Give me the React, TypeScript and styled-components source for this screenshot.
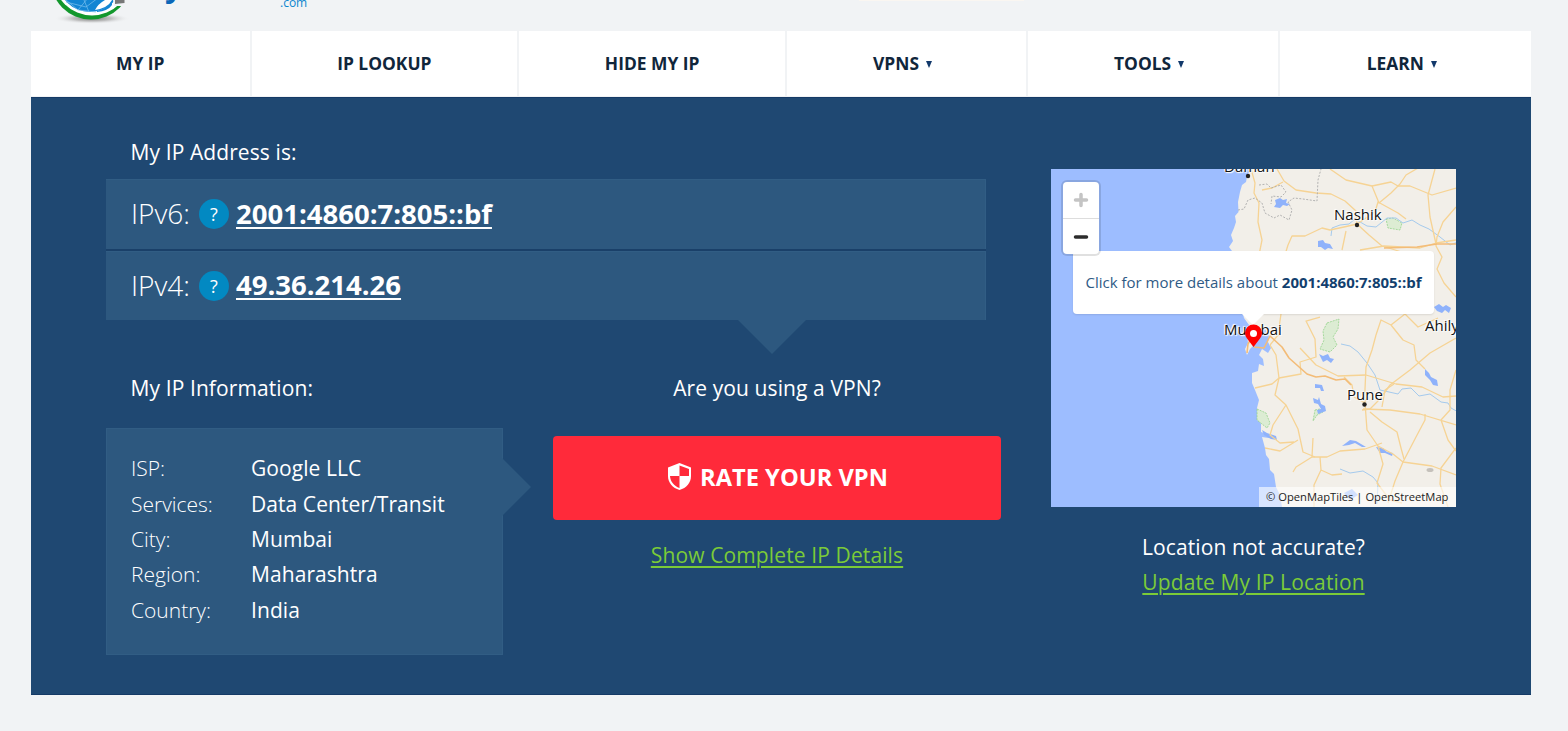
import React from "react";
import styled, { createGlobalStyle } from "styled-components";

const GlobalStyle = createGlobalStyle`
  *, *::before, *::after { box-sizing: border-box; }
  html { overflow: hidden; }
  body {
    margin: 0;
    background: #f1f3f5;
    font-family: "Open Sans", "Noto Sans", sans-serif;
    color: #fff;
  }
  p, h2, dl, dd, dt { margin: 0; font-weight: 400; }
`;

const Page = styled.div`
  width: 1500px;
  height: 731px;
  margin-left: 31px;
  overflow: hidden;
`;

const Header = styled.header`
  height: 31px;
  display: flex;
  align-items: flex-start;
  position: relative;
`;

const LogoMark = styled.svg`
  display: block;
  margin-left: 14px;
  flex: none;
`;

const LogoName = styled.span`
  margin: -34px 0 0 36px;
  width: 115px;
  font-size: 31px;
  line-height: 38px;
  font-weight: 700;
  color: #0b66b8;
  white-space: nowrap;
`;

const LogoSuffix = styled.span`
  margin-top: -5px;
  font-size: 12px;
  line-height: 16px;
  color: #0c86cf;
`;

const HeaderEdge = styled.div`
  margin-left: 552px;
  width: 165px;
  height: 1px;
  background: #faf6f1;
`;

const Nav = styled.nav`
  display: grid;
  grid-template-columns: 218.5px 265.5px 266px 238.5px 250.5px 250.5px;
  justify-content: space-between;
  height: 65px;
  margin-bottom: 1px;
`;

const NavItem = styled.a<{ $menu?: boolean }>`
  display: flex;
  align-items: center;
  justify-content: center;
  gap: 7px;
  background: #fff;
  color: #10263b;
  font-size: 17.4px;
  font-weight: 700;
  padding: 0 ${(p) => (p.$menu ? 8 : 0)}px 1px 0;
`;

const Caret = styled.span`
  width: 0;
  height: 0;
  margin-top: 2px;
  border: 3.5px solid transparent;
  border-top: 7px solid #12396b;
  border-bottom: 0;
`;

const Panel = styled.main`
  display: flex;
  gap: 50px;
  height: 598px;
  padding: 0 75px;
  background: #1f4872;
  border: 1px solid #153a66;
  border-width: 1px 0 1px 0;
`;

const Primary = styled.section`
  width: 895px;
  flex: none;
`;

const Heading = styled.h2<{ $top: number }>`
  margin-top: ${(p) => p.$top}px;
  padding-left: 24.5px;
  font-size: 21px;
  line-height: 28px;
  letter-spacing: 0.1px;
`;

const AddressList = styled.div`
  position: relative;
  width: 880px;
  margin-top: 13px;
  display: grid;
  gap: 2px;
  background: #1a4069;

  &::after {
    content: "";
    position: absolute;
    top: 141px;
    left: 632px;
    border: 34px solid transparent;
    border-top-color: #2d587f;
    border-bottom: 0;
  }
`;

const AddressRow = styled.div`
  display: flex;
  align-items: center;
  height: 69.5px;
  padding: 0 25px;
  background: #2d587f;
  border: 1px solid #315d84;
  border-width: 1px 1px 0 0;
`;

const Protocol = styled.span`
  width: 68px;
  margin-top: -2px;
  font-size: 28px;
  font-weight: 300;
`;

const Help = styled.span`
  width: 30px;
  height: 30px;
  border-radius: 50%;
  background: #0289c2;
  text-align: center;
  font-size: 18px;
  line-height: 31px;
`;

const Address = styled.a`
  margin: -2px 0 0 7px;
  font-size: 27.5px;
  font-weight: 700;
  text-decoration: underline;
  text-decoration-thickness: 2px;
  text-underline-offset: 3px;
`;

const Lower = styled.div`
  display: flex;
  gap: 50px;
`;

const InfoColumn = styled.div`
  width: 397px;
`;

const InfoBox = styled.dl`
  position: relative;
  margin-top: 26px;
  height: 227px;
  padding: 21.5px 24px;
  background: #2d587f;
  border: 1px solid #315d84;
  display: grid;
  grid-template-columns: 120px 1fr;
  grid-auto-rows: 35.4px;
  align-items: center;
  font-size: 21px;
  line-height: 28px;

  &::after {
    content: "";
    position: absolute;
    top: 29px;
    left: 395px;
    border: 29px solid transparent;
    border-left-color: #2d587f;
    border-right: 0;
  }
`;

const Term = styled.dt`
  font-weight: 300;
  white-space: nowrap;
`;

const Value = styled.dd`
  letter-spacing: 0.07px;
  white-space: nowrap;
`;

const VpnColumn = styled.div`
  width: 448px;
  display: flex;
  flex-direction: column;
  align-items: center;
`;

const Question = styled.p<{ $top: number }>`
  margin-top: ${(p) => p.$top}px;
  font-size: 21px;
  line-height: 28px;
  letter-spacing: 0.1px;
  white-space: nowrap;
`;

const RateButton = styled.a`
  margin-top: 34px;
  width: 448px;
  height: 84px;
  display: flex;
  align-items: center;
  justify-content: center;
  gap: 9px;
  padding: 0 0 3px 2px;
  background: #ff2a3a;
  border-radius: 4px;
  font-size: 23.7px;
  font-weight: 700;
`;

const GreenLink = styled.a<{ $top: number }>`
  margin-top: ${(p) => p.$top}px;
  font-size: 21px;
  line-height: 28px;
  letter-spacing: 0.12px;
  color: #7bcb38;
  text-decoration: underline;
  text-decoration-thickness: 2px;
  text-underline-offset: 3px;
  white-space: nowrap;
`;

const Aside = styled.aside`
  width: 405px;
  flex: none;
  padding-top: 71px;
  display: flex;
  flex-direction: column;
  align-items: center;
`;

const MapFrame = styled.div`
  position: relative;
  width: 405px;
  height: 338px;
  overflow: hidden;
  background: #9dbdff;
`;

const MapArt = styled.svg`
  display: block;
`;

const Place = styled.span<{ $x: number; $y: number }>`
  position: absolute;
  left: ${(p) => p.$x}px;
  top: ${(p) => p.$y}px;
  font-size: 15px;
  line-height: 20px;
  color: #111;
  white-space: nowrap;
  text-shadow: 0 0 2px #fff, 0 0 2px #fff, 1px 1px 1px #fff, -1px -1px 1px #fff;
`;

const ZoomControl = styled.div`
  position: absolute;
  left: 12px;
  top: 13px;
  width: 36px;
  border-radius: 4px;
  background: #fff;
  box-shadow: 0 0 0 2px rgba(0, 0, 0, 0.12);
`;

const ZoomButton = styled.div<{ $off?: boolean }>`
  height: 36px;
  display: grid;
  place-items: center;
  color: ${(p) => (p.$off ? "#c4c4c4" : "#2c2c2c")};
  & + & { border-top: 1px solid #ddd; }
`;

const Popup = styled.div`
  position: absolute;
  left: 22px;
  top: 82px;
  width: 361px;
  height: 63px;
  padding-bottom: 1px;
  display: flex;
  align-items: center;
  justify-content: center;
  background: #fff;
  border-radius: 4px;
  box-shadow: 0 1px 2px rgba(0, 0, 0, 0.1);
  color: #2f5b86;
  font-size: 15px;
  line-height: 20px;
  white-space: pre;

  strong { color: #123f6e; }

  &::after {
    content: "";
    position: absolute;
    top: 63px;
    left: 169px;
    border: 11px solid transparent;
    border-top-color: #fff;
    border-bottom: 0;
  }
`;

const Pin = styled.svg`
  position: absolute;
  left: 193px;
  top: 155px;
`;

const Attribution = styled.div`
  position: absolute;
  right: 0;
  bottom: 0;
  width: 197px;
  height: 20px;
  padding-left: 7px;
  background: rgba(255, 255, 255, 0.6);
  color: #222;
  font-size: 11.2px;
  line-height: 20px;
  white-space: nowrap;
`;

const navItems = [
  { label: "MY IP" },
  { label: "IP LOOKUP" },
  { label: "HIDE MY IP" },
  { label: "VPNS", menu: true },
  { label: "TOOLS", menu: true },
  { label: "LEARN", menu: true },
];

const details = [
  ["ISP:", "Google LLC"],
  ["Services:", "Data Center/Transit"],
  ["City:", "Mumbai"],
  ["Region:", "Maharashtra"],
  ["Country:", "India"],
];

const land =
  "M1250 169L1247 177L1246 182L1242 185L1240 192L1238 202L1238.500 212L1235 216L1236 222L1234 228L1231 235L1233 241L1229 247L1232 251L1236 262L1238 280L1240 300L1243 314L1244 318L1249 325L1247 335L1248 343L1245 349L1247 355L1250 349L1254 345L1257 336L1262 325L1265 329L1269 335L1268 342L1271 348L1268 353L1262 349L1259 355L1263 359L1264 366L1259 364L1258 371L1252 373L1252 383L1255 390L1259 400L1257 408L1258 418L1261 424L1261 432L1274 436L1276 439L1262 437L1265 448L1266 455L1269 459L1270 470L1274 474L1276 487L1280 495L1282 507H1456V169Z";

const roads = [
  "M1251 169L1255 183L1254 193L1259 203L1258 222L1262 240L1259 255",
  "M1277 169L1284 181L1296 190L1316 193L1331 194L1345 201L1356 211L1357 224L1344 227L1330 230L1322 228L1305 236L1292 236L1288 245L1284 258",
  "M1283 182L1272 188L1262 190",
  "M1330 169L1346 180L1372 186L1379 203L1391 193L1400 184L1406 175L1418 168",
  "M1372 186L1391 182L1398 186L1410 186L1432 195L1456 188",
  "M1357 224L1375 212L1378 202L1398 213L1406 219",
  "M1357 224L1369 235L1382 246L1405 253",
  "M1346 231L1342 250",
  "M1456 207L1443 222L1437 237L1436 246L1442 257L1437 269L1444 283L1456 297",
  "M1435 169L1428 195L1430 217L1436 244",
  "M1360 250L1384 246L1420 248L1436 243L1456 240",
  "M1270 345L1278 335L1281 314M1270 345L1276 355L1279 378L1272 384L1255 388",
  "M1279 378L1301 374L1300 362L1316 357L1315 339L1306 321L1320 317M1279 378L1275 395L1286 405L1298 429L1303 452L1315 457",
  "M1286 405L1273 425L1270 435L1280 443L1294 442M1265 448L1280 451L1298 440",
  "M1313 438L1312 457L1296 467L1293 472M1312 457L1327 457L1340 451L1365 449L1382 443M1320 457L1321 470L1314 485L1314 507M1321 470L1332 475L1342 474",
  "M1376 335L1372 350L1366 367L1365 389L1365 403L1367 430L1378 446L1393 454L1403 462L1432 466L1456 475",
  "M1403 462L1416 437L1425 420L1425 414M1456 338L1430 353L1410 370L1390 385L1380 399L1370 409L1362 410",
  "M1300 348L1316 365L1338 376L1366 375L1396 384L1422 387L1443 397L1456 396",
  "M1363 409L1390 410L1420 414L1456 425M1441 420L1450 410L1450 390L1456 370M1441 420L1448 440L1456 451",
  "M1378 446L1383 464L1377 483L1390 500L1402 503M1403 462L1395 481L1388 503M1456 448L1441 468L1440 484L1448 507",
  "M1365 403L1354 397L1352 385L1344 377M1370 412L1382 422L1397 432L1401 448L1404 459M1382 407L1385 390L1394 384",
  "M1376 335L1381 320L1391 325L1403 340L1414 345L1416 360L1425 369M1391 325L1405 314L1418 327L1438 318",
];

const water = [
  "M1275 200l5-2 3 2 4-1-1 4 4 1-3 2-4-1-3 3-6-1 2-3z",
  "M1318 241l5-1 2 3 5 1 3 5-5-1-3 2-4-3-3 0z",
  "M1434 307l5-3 4 3 3-2 5 3-2 5-4-3-3 3-5-2z",
  "M1319 354l4 2 5-2 2 4 4 1-3 4-4-3-4 2z",
  "M1315 384l7 1 2 6-3 0-1-3-5 0zM1313 398l5 2 1-3 2 7 4 2 1 5-8 3-1-4 4-1-3-5-4-1z",
  "M1425 369l4 4 2 4 6 3 1 6-5-1-3-5-5-5z",
  "M1342 446l8-6 6 1 10 6-4 0-7-4-6 2z",
  "M1376 447l7 1 4 4 6 1-1 3-7-3-5 0z",
  "M1344 493l8-4 6 6-8 5z",
  "M1262 430l5 3 9 3 1 4-6-1-7-4z",
];

const parks = [
  "M1327 323l12-4-1 10-5 8 4 8-7 7-10-3 4-9-1-9z",
  "M1386 219l7-1 9 5-2 7-12-2z",
  "M1257 409l9 4 4 10-3 5-10-8z",
  "M1315 410l5-1 3 3-6 3-4 6z",
];

function MapDrawing() {
  return (
    <MapArt width="405" height="338" viewBox="1051 169 405 338" fill="none" strokeLinejoin="round">
      <path d={land} fill="#f2efe9" />
      {parks.map((d) => (
        <path key={d} d={d} fill="#dcecd3" stroke="#94d38b" strokeWidth=".8" strokeDasharray="2 1" />
      ))}
      {water.map((d) => (
        <path key={d} d={d} fill="#8fb2fb" />
      ))}
      <g stroke="#a5caed" strokeWidth="1">
        <path d="M1331 236l1-8 8-3 9-1 6-5 12 7 9 1 11-9 9 0 7 5 9-3 8 5 9 4 11 8 10 8 8-3" />
        <path d="M1341 344l9 2 8 6 9 11 8 12 5 15 18 4 4-5 9-1 8 8 11-2 11 8 7 1 3 5 9 5" />
        <path d="M1340 469l10 4 13-2 10 6 5 6-1 21" />
      </g>
      <g stroke="#f6d394" strokeWidth="1.3">
        {roads.map((d) => (
          <path key={d} d={d} />
        ))}
      </g>
      <path
        d="M1254 347l10 1 6-12 12 11 7 11 18 16 9 3 9-1 11 4 9-1 6 6"
        stroke="#f3bc78"
        strokeWidth="1.6"
      />
      <path d="M1384 248l33-1 20-3 19 0M1247 353l1-9 4-7" stroke="#f3bc78" strokeWidth="1.6" />
      <g stroke="#aaa" strokeWidth=".9" strokeDasharray="2 1.5">
        <path d="M1238 210l6-1 4-9 7-2 7 5 3 10 9 5 6-3 9 5 3-10-4-8 6-4 9 1 14 2 1-21 3-11" />
        <path d="M1259 185l8-1 4 4 10-3 5 7-5 5-9-1-1 8" />
      </g>
      <circle cx="1248" cy="176" r="2.2" fill="#222" />
      <circle cx="1357" cy="225" r="2.2" fill="#222" />
      <circle cx="1364.500" cy="404.500" r="2.2" fill="#222" />
      <ellipse cx="1430" cy="470" rx="3.500" ry="2" fill="#c5c1bb" />
    </MapArt>
  );
}

export default function App() {
  return (
    <>
      <GlobalStyle />
      <Page>
        <Header>
          <LogoMark width="84" height="31" viewBox="45 0 84 31">
            <defs>
              <radialGradient id="shadow">
                <stop offset="0" stopColor="#777" />
                <stop offset=".5" stopColor="#aaa" stopOpacity=".7" />
                <stop offset="1" stopColor="#f1f3f5" stopOpacity="0" />
              </radialGradient>
            </defs>
            <ellipse cx="92" cy="18.500" rx="38" ry="5.500" fill="url(#shadow)" />
            <circle cx="91" cy="-21" r="40.500" fill="#12972c" />
            <circle cx="92" cy="-23" r="38.500" fill="#fff" />
            <circle cx="90" cy="-20" r="32" fill="#1285d3" />
            <path d="M66 0l12 10 18 2M78 10l10-12 14 1M84 0l5 12M66 2l20 5 12-9" stroke="#7cc2ef" strokeWidth=".7" fill="none" />
            <path d="M97 11Q109 8 112 0V5Q108 11 97 12z" fill="#1285d3" />
            <path d="M95 10Q98 4 105 0H112Q108 8 95 10z" fill="#fff" />
            <path d="M113 0h16v7l-6-1-9 0z" fill="#f1f3f5" />
            <path d="M115 0h9.500v3l-9.500 1z" fill="#777" />
          </LogoMark>
          <LogoName>y</LogoName>
          <LogoSuffix>.com</LogoSuffix>
          <HeaderEdge />
        </Header>

        <Nav>
          {navItems.map((item) => (
            <NavItem key={item.label} $menu={item.menu}>
              {item.label}
              {item.menu && <Caret />}
            </NavItem>
          ))}
        </Nav>

        <Panel>
          <Primary>
            <Heading $top={40}>My IP Address is:</Heading>
            <AddressList>
              <AddressRow>
                <Protocol>IPv6:</Protocol>
                <Help>?</Help>
                <Address>2001:4860:7:805::bf</Address>
              </AddressRow>
              <AddressRow>
                <Protocol>IPv4:</Protocol>
                <Help>?</Help>
                <Address>49.36.214.26</Address>
              </AddressRow>
            </AddressList>

            <Lower>
              <InfoColumn>
                <Heading $top={54}>My IP Information:</Heading>
                <InfoBox>
                  {details.map(([term, value]) => (
                    <React.Fragment key={term}>
                      <Term>{term}</Term>
                      <Value>{value}</Value>
                    </React.Fragment>
                  ))}
                </InfoBox>
              </InfoColumn>
              <VpnColumn>
                <Question $top={54}>Are you using a VPN?</Question>
                <RateButton>
                  <svg width="23" height="27" viewBox="0 0 23 27">
                    <path d="M11.500 0L23 4.500V13C23 19.500 18.500 25 11.500 27C4.500 25 0 19.500 0 13V4.500Z" fill="#fff" />
                    <path d="M11.500 2.500L21 6V13H11.500ZM11.500 13V25C6 23 2.300 18.500 2 13Z" fill="#ff2a3a" />
                  </svg>
                  RATE YOUR VPN
                </RateButton>
                <GreenLink $top={21}>Show Complete IP Details</GreenLink>
              </VpnColumn>
            </Lower>
          </Primary>

          <Aside>
            <MapFrame>
              <MapDrawing />
              <Place $x={173} $y={-13}>Daman</Place>
              <Place $x={283} $y={35}>Nashik</Place>
              <Place $x={173} $y={150}>Mumbai</Place>
              <Place $x={374} $y={146}>Ahilyanagar</Place>
              <Place $x={296} $y={215}>Pune</Place>
              <Popup>
                Click for more details about <strong>2001:4860:7:805::bf</strong>
              </Popup>
              <Pin width="19" height="24" viewBox="0 0 19 24">
                <path d="M9.500 23L3 14.500A8.500 8.500 0 1 1 16 14.500Z" fill="#f00" />
                <circle cx="9.500" cy="9.500" r="3.500" fill="#fff" />
              </Pin>
              <ZoomControl>
                <ZoomButton $off>
                  <svg width="16" height="16" viewBox="0 0 16 16">
                    <path d="M8 2.500V13.500M2.500 8H13.500" stroke="currentColor" strokeWidth="3.500" strokeLinecap="round" />
                  </svg>
                </ZoomButton>
                <ZoomButton>
                  <svg width="16" height="16" viewBox="0 0 16 16">
                    <path d="M2.500 8H13.500" stroke="currentColor" strokeWidth="3.500" strokeLinecap="round" />
                  </svg>
                </ZoomButton>
              </ZoomControl>
              <Attribution>© OpenMapTiles | OpenStreetMap</Attribution>
            </MapFrame>
            <Question $top={26}>Location not accurate?</Question>
            <GreenLink $top={7}>Update My IP Location</GreenLink>
          </Aside>
        </Panel>
      </Page>
    </>
  );
}
